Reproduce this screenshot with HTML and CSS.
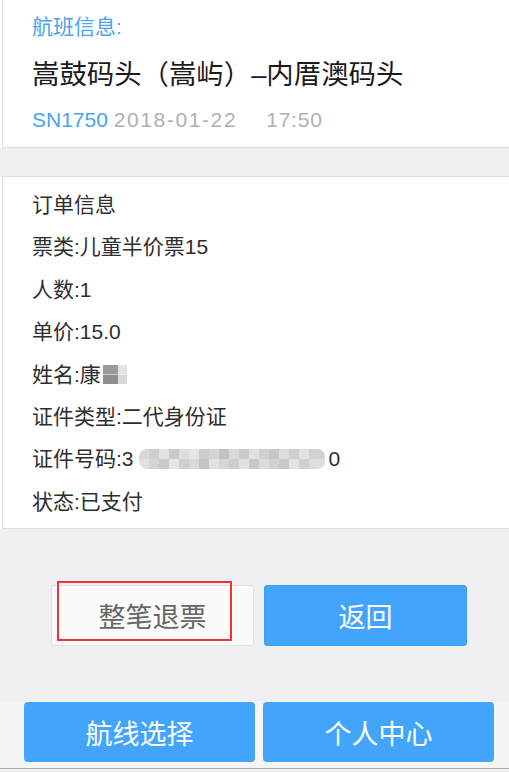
FILE: index.html
```html
<!DOCTYPE html>
<html lang="zh-CN">
<head>
    <meta charset="UTF-8">
    <meta name="viewport" content="width=device-width, initial-scale=1.0">
    <title>订单详情</title>
<link rel="stylesheet" href="styles.css">
</head>
<body>

    <!-- Infos du vol -->
    <div class="card flight">
        <div class="label">航班信息:</div>
        <div class="route">嵩鼓码头（嵩屿）–内厝澳码头</div>
        <div class="meta"><span class="no">SN1750</span> <span class="date">2018-01-22</span><span class="date time">17:50</span></div>
    </div>

    <div class="spacer"></div>

    <!-- Infos de la commande -->
    <div class="card order">
        <div class="row">订单信息</div>
        <div class="row">票类:儿童半价票15</div>
        <div class="row">人数:1</div>
        <div class="row">单价:15.0</div>
        <div class="row">姓名:康<span class="mosaic mosaic-name"></span></div>
        <div class="row">证件类型:二代身份证</div>
        <div class="row">证件号码:3<span class="mosaic mosaic-id"></span>0</div>
        <div class="row">状态:已支付</div>
    </div>

    <div class="actions">
        <div class="btn-wrap">
            <button class="btn btn-plain">整笔退票</button>
            <span class="mark"></span>
        </div>
        <button class="btn btn-blue">返回</button>
    </div>

    <div class="tabbar">
        <button class="tab">航线选择</button>
        <button class="tab">个人中心</button>
    </div>

</body>
</html>
```

FILE: styles.css
```css
body {
    margin: 0;
    width: 509px;
    background-color: #efeff4;
    font-family: "Liberation Sans", "Noto Sans CJK SC", sans-serif;
    color: #333;
}

.card {
    background-color: #FFFFFF;
    margin-left: 2px;
    border-left: 1px solid #dcdcdc;
    box-shadow: -2px 0 0 #FFFFFF;
    padding-left: 29px;
}

/* Bloc vol */
.flight {
    padding-top: 12px;
    padding-bottom: 12px;
    border-bottom: 1px solid #e0e0e0;
}
.label {
    font-size: 21px;
    line-height: 30px;
    color: #4aa2f0;
}
.route {
    font-size: 27.4px;
    line-height: 36px;
    margin-top: 15px;
    color: #1a1a1a;
}
.meta {
    font-size: 21px;
    line-height: 30px;
    margin-top: 12px;
}
.no {
    color: #4aa2f0;
}
.date {
    color: #b0b0b0;
    letter-spacing: 1.6px;
}
.time {
    margin-left: 29px;
    letter-spacing: 0.8px;
}

.spacer {
    height: 28px;
}

/* Bloc commande */
.order {
    border-top: 1px solid #e0e0e0;
    border-bottom: 1px solid #e0e0e0;
    padding-top: 7px;
    padding-bottom: 5px;
}
.row {
    font-size: 21px;
    line-height: 42.4px;
    color: #2e2e2e;
}
.mosaic {
    display: inline-block;
    vertical-align: middle;
    filter: blur(0.5px);
}
.mosaic-name {
    width: 24px;
    height: 19px;
    margin-left: 2px;
    margin-top: -3px;
    background:
        linear-gradient(90deg, #9a9a9a 0 15px, #e4e4e4 15px 24px) top / 100% 50% no-repeat,
        linear-gradient(90deg, #8e8e8e 0 15px, #d8d8d8 15px 24px) bottom / 100% 50% no-repeat;
}
.mosaic-id {
    width: 186px;
    height: 20px;
    margin: -3px 4px 0 5px;
    border-radius: 8px;
    background:
        linear-gradient(90deg, #d8d8d8 0 10px, #cfcfcf 10px 20px, #e2e2e2 20px 30px, #c9c9c9 30px 40px, #dedede 40px 50px, #e6e6e6 50px 60px, #cccccc 60px 70px, #d4d4d4 70px 80px, #c2c2c2 80px 90px, #dadada 90px 100px, #cbcbcb 100px 110px, #e0e0e0 110px 120px, #d0d0d0 120px 130px, #c6c6c6 130px 140px, #dcdcdc 140px 150px, #cecece 150px 160px, #e2e2e2 160px 170px, #d2d2d2 170px 186px) top / 100% 50% no-repeat,
        linear-gradient(90deg, #e0e0e0 0 10px, #d4d4d4 10px 20px, #cacaca 20px 30px, #e4e4e4 30px 40px, #cfcfcf 40px 50px, #d9d9d9 50px 60px, #c4c4c4 60px 70px, #e2e2e2 70px 80px, #d6d6d6 80px 90px, #cdcdcd 90px 100px, #e1e1e1 100px 110px, #c8c8c8 110px 120px, #dbdbdb 120px 130px, #d2d2d2 130px 140px, #c9c9c9 140px 150px, #e3e3e3 150px 160px, #d0d0d0 160px 170px, #dddddd 170px 186px) bottom / 100% 50% no-repeat;
}

/* Boutons */
.actions {
    display: flex;
    gap: 10px;
    padding-left: 51px;
    padding-top: 56px;
    height: 116px;
}
.btn {
    width: 203px;
    height: 61px;
    font-family: "Noto Sans CJK SC", sans-serif;
    font-size: 27px;
    border-radius: 3px;
    padding: 0;
}
.btn-wrap {
    position: relative;
}
.btn-plain {
    background-color: #fafafa;
    color: #666;
    border: 1px solid #e2e2e2;
}
.btn-blue {
    background-color: #42a5fb;
    color: #FFF;
    border: 1px solid #3d9fef;
}
/* Cadre rouge d'annotation */
.mark {
    position: absolute;
    left: 6px;
    top: -4px;
    width: 171px;
    height: 56px;
    border: 2px solid #f03434;
}

/* Barre du bas */
.tabbar {
    display: flex;
    gap: 8px;
    padding-left: 24px;
    padding-top: 1px;
    background-color: #f5f5f5;
    border-bottom: 1px solid #a8a8a8;
    box-sizing: border-box;
    height: 68px;
}
.tab {
    width: 231px;
    height: 60px;
    border: none;
    border-radius: 4px;
    background-color: #42a5fb;
    color: #FFF;
    font-family: "Noto Sans CJK SC", sans-serif;
    font-size: 27px;
    padding: 0;
}
```
